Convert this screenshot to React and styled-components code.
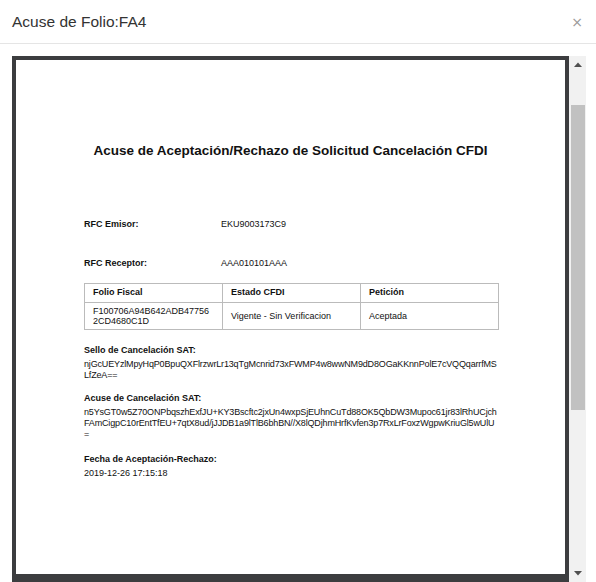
import styled, { createGlobalStyle } from "styled-components"

const GlobalStyle = createGlobalStyle`
  html, body {
    margin: 0;
    padding: 0;
    background: #fff;
    overflow: hidden;
  }
  body {
    font-family: "Liberation Sans", Arial, sans-serif;
  }
`

const Modal = styled.div`
  width: 596px;
  height: 582px;
  background: #fff;
  display: flex;
  flex-direction: column;
`

const Header = styled.div`
  height: 43px;
  border-bottom: 1px solid #e5e5e5;
  display: flex;
  align-items: center;
  justify-content: space-between;
  padding: 0 13px 0 12px;
  flex-shrink: 0;
`

const Title = styled.h4`
  margin: 0;
  font-family: "Liberation Sans Narrow", "Liberation Sans", Arial, sans-serif;
  font-weight: 400;
  font-size: 15.5px;
  color: #333;
`

const Close = styled.button`
  border: 0;
  background: none;
  padding: 0;
  font-family: "DejaVu Sans", sans-serif;
  font-size: 14px;
  line-height: 1;
  color: #999;
  cursor: pointer;
`

const Body = styled.div`
  padding: 12px 10px 0 12px;
`

const Frame = styled.div`
  display: flex;
  height: 526px;
`

const Viewer = styled.div`
  flex: 1;
  background: #3c3d3f;
  padding: 4px 4px 0 4px;
  overflow: hidden;
`

const Sheet = styled.div`
  background: #fff;
  height: 514px;
  color: #111;
  font-size: 9px;
  line-height: 12px;
  overflow: hidden;
`

const DocTitle = styled.h1`
  margin: 83px 0 0;
  text-align: center;
  font-size: 13.5px;
  line-height: 16px;
  font-weight: 700;
`

const Content = styled.div`
  margin-left: 68px;
  width: 415px;
`

const Field = styled.div`
  display: grid;
  grid-template-columns: 137px 1fr;
  margin-top: ${p => p.$top}px;
`

const Label = styled.div`
  font-weight: 700;
`

const Table = styled.table`
  margin-top: 14px;
  width: 415px;
  border-collapse: collapse;
  table-layout: fixed;
  th, td {
    border: 1px solid #bbb;
    text-align: left;
    padding: 0 8px;
    vertical-align: middle;
  }
  th {
    height: 17px;
    line-height: 11px;
    font-weight: 700;
    padding-bottom: 1px;
  }
  td {
    height: 26px;
    line-height: 10px;
  }
`

const Block = styled.div`
  margin-top: ${p => p.$top}px;
`

const Lines = styled.div`
  margin-top: 3px;
  line-height: 11px;
  white-space: nowrap;
  letter-spacing: ${p => (p.$tight ? "-0.16px" : "0")};
`

const ScrollBar = styled.div`
  width: 17px;
  background: #f1f1f1;
  display: flex;
  flex-direction: column;
`

const Arrow = styled.div`
  height: 17px;
  display: flex;
  align-items: center;
  justify-content: center;
  flex-shrink: 0;
`

const Track = styled.div`
  flex: 1;
  padding: 32px 1px 0 2px;
`

const Thumb = styled.div`
  height: 305px;
  background: #c1c1c1;
`

const Triangle = ({ down }) => (
  <svg width="8" height="5" viewBox="0 0 8 5">
    <path d={down ? "M0 0H8L4 4.5Z" : "M0 5H8L4 0.5Z"} fill="#505050" />
  </svg>
)

const sello = [
  "njGcUEYzlMpyHqP0BpuQXFlrzwrLr13qTgMcnrid73xFWMP4w8wwNM9dD8OGaKKnnPolE7cVQQqarrfMS",
  "LfZeA==",
]

const acuse = [
  "n5YsGT0w5Z70ONPbqszhExfJU+KY3Bscftc2jxUn4wxpSjEUhnCuTd88OK5QbDW3Mupoc61jr83lRhUCjch",
  "FAmCigpC10rEntTfEU+7qtX8ud/jJJDB1a9lTlB6bhBN//X8lQDjhmHrfKvfen3p7RxLrFoxzWgpwKriuGl5wUlU",
  "=",
]

export default function App() {
  return (
    <>
      <GlobalStyle />
      <Modal>
        <Header>
          <Title>Acuse de Folio:FA4</Title>
          <Close>×</Close>
        </Header>
        <Body>
          <Frame>
            <Viewer>
              <Sheet>
                <DocTitle>Acuse de Aceptación/Rechazo de Solicitud Cancelación CFDI</DocTitle>
                <Content>
                  <Field $top={59}>
                    <Label>RFC Emisor:</Label>
                    <div>EKU9003173C9</div>
                  </Field>
                  <Field $top={27}>
                    <Label>RFC Receptor:</Label>
                    <div>AAA010101AAA</div>
                  </Field>
                  <Table>
                    <thead>
                      <tr>
                        <th>Folio Fiscal</th>
                        <th>Estado CFDI</th>
                        <th>Petición</th>
                      </tr>
                    </thead>
                    <tbody>
                      <tr>
                        <td>F100706A94B642ADB47756<br />2CD4680C1D</td>
                        <td>Vigente - Sin Verificacion</td>
                        <td>Aceptada</td>
                      </tr>
                    </tbody>
                  </Table>
                  <Block $top={14}>
                    <Label>Sello de Cancelación SAT:</Label>
                    <Lines $tight>{sello.map(l => <div key={l}>{l}</div>)}</Lines>
                  </Block>
                  <Block $top={11}>
                    <Label>Acuse de Cancelación SAT:</Label>
                    <Lines $tight>{acuse.map(l => <div key={l}>{l}</div>)}</Lines>
                  </Block>
                  <Block $top={13}>
                    <Label>Fecha de Aceptación-Rechazo:</Label>
                    <Lines>2019-12-26 17:15:18</Lines>
                  </Block>
                </Content>
              </Sheet>
            </Viewer>
            <ScrollBar>
              <Arrow><Triangle /></Arrow>
              <Track><Thumb /></Track>
              <Arrow><Triangle down /></Arrow>
            </ScrollBar>
          </Frame>
        </Body>
      </Modal>
    </>
  )
}
